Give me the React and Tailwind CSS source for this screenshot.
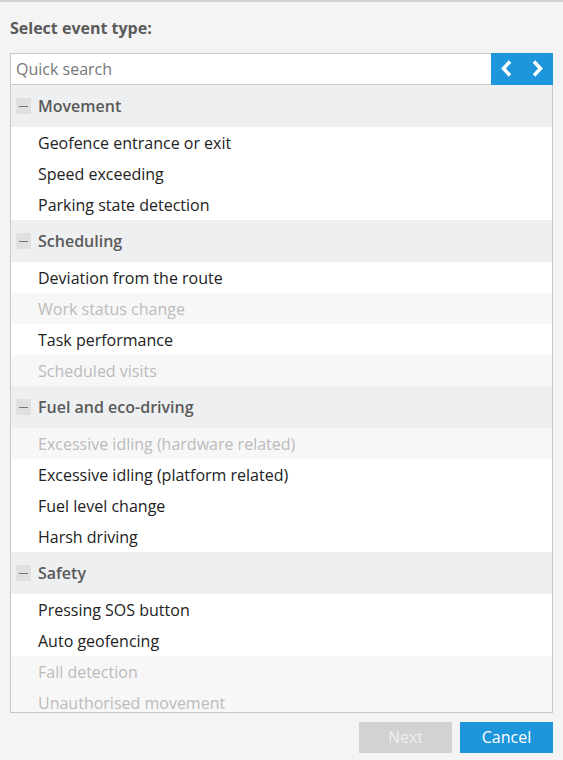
import React from "react";

const groups = [
  {
    name: "Movement",
    items: [
      ["Geofence entrance or exit", true],
      ["Speed exceeding", true],
      ["Parking state detection", true],
    ],
  },
  {
    name: "Scheduling",
    items: [
      ["Deviation from the route", true],
      ["Work status change", false],
      ["Task performance", true],
      ["Scheduled visits", false],
    ],
  },
  {
    name: "Fuel and eco-driving",
    items: [
      ["Excessive idling (hardware related)", false],
      ["Excessive idling (platform related)", true],
      ["Fuel level change", true],
      ["Harsh driving", true],
    ],
  },
  {
    name: "Safety",
    items: [
      ["Pressing SOS button", true],
      ["Auto geofencing", true],
      ["Fall detection", false],
      ["Unauthorised movement", false],
    ],
  },
];

export default function App() {
  return (
    <div
      className="w-[563px] h-[760px] bg-[#f4f4f4] border-t-2 border-[#d2d2d2] px-[10px] flex flex-col overflow-hidden"
      style={{ fontFamily: '"Open Sans", "Noto Sans", sans-serif' }}
    >
      <div className="pt-[14px] h-[51px] text-[16px] font-bold text-[#5a5a5a]">Select event type:</div>

      <div className="flex h-[32px]">
        <div className="flex-1 bg-white border border-[#c8c8cc] border-r-0 flex items-center px-[5px] text-[16px] text-[#777]">
          Quick search
        </div>
        <div className="w-[62px] bg-[#1e96dc] flex items-center justify-center gap-[20px] pb-[1px]">
          <svg width="11" height="17" viewBox="0 0 11 17">
            <path d="M9 1.5 L2.5 8.5 L9 15.5" fill="none" stroke="white" strokeWidth="3.5" />
          </svg>
          <svg width="11" height="17" viewBox="0 0 11 17">
            <path d="M2 1.5 L8.5 8.5 L2 15.5" fill="none" stroke="white" strokeWidth="3.5" />
          </svg>
        </div>
      </div>

      <div className="h-[628px] overflow-hidden border border-t-0 border-[#c8c8cc] bg-white">
        {groups.map((g) => (
          <div key={g.name}>
            <div className="h-[42px] bg-[#eeeff1] flex items-center pl-[5px]">
              <div className="w-[15px] h-[16px] bg-[#dfe0e2] flex items-center justify-center mr-[7px]">
                <div className="w-[9px] h-[1px] bg-[#777]" />
              </div>
              <span className="text-[16px] font-semibold text-[#5a5a5a]">{g.name}</span>
            </div>
            {g.items.map(([label, on]) => (
              <div
                key={label}
                className={`h-[31px] flex items-center pl-[27px] text-[16px] ${
                  on ? "bg-white text-[#222]" : "bg-[#f7f7f7] text-[#bbbbbb]"
                }`}
              >
                {label}
              </div>
            ))}
          </div>
        ))}
      </div>

      <div className="flex justify-end gap-[8px] pt-[9px]">
        <button className="w-[93px] h-[31px] bg-[#d2d2d4] text-[#eeeeee] text-[16px] pb-[1px]">Next</button>
        <button className="w-[93px] h-[31px] bg-[#1e96dc] text-white text-[16px] pb-[1px]">Cancel</button>
      </div>
    </div>
  );
}
